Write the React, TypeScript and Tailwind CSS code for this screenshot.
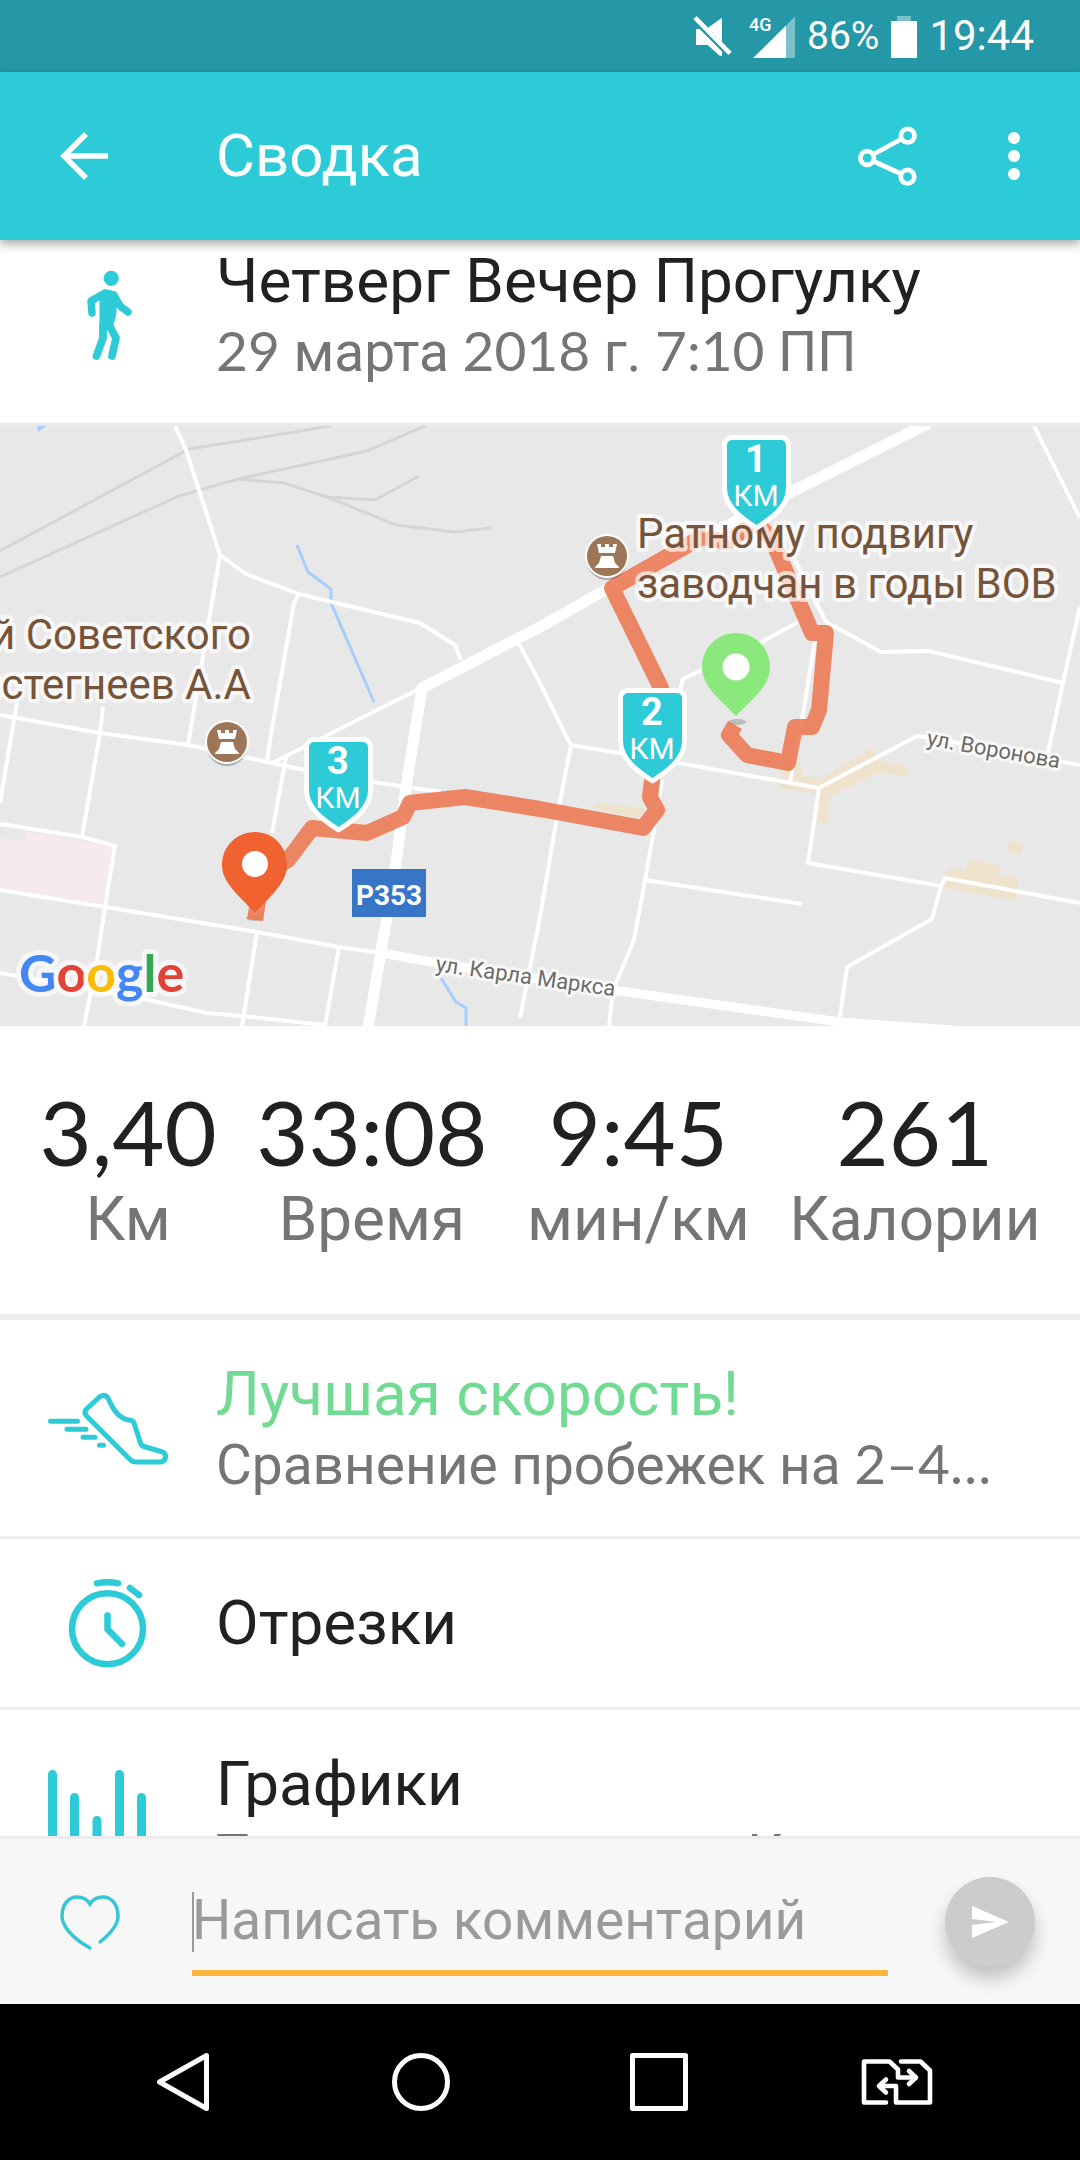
import { useState } from "react";
import type { FormEvent, ReactNode } from "react";

const stats = [
    { value: "3,40", label: "Км" },
    { value: "33:08", label: "Время" },
    { value: "9:45", label: "мин/км" },
    { value: "261", label: "Калории" },
];

const railways = [
    "0,125 189,23 331,0",
    "0,151 179,70 238,53 367,25 427,-1",
    "238,53 284,57 327,71 375,74 419,50",
    "327,71 396,99 455,106 491,102",
];

const streets = [
    "175,0 186,24 220,129 246,148 299,168 336,177 420,197 455,219 461,234",
    "220,129 208,200 188,319",
    "299,168 294,177 270,314 267,336",
    "417,264 324,311 272,337",
    "0,289 28,294 100,307 188,319 267,336 305,344 372,356 441,366",
    "17,277 14,294 0,377",
    "103,281 100,307 82,411",
    "0,398 82,411 115,420 105,481 96,541 84,600",
    "0,464 105,481 257,506 339,521 382,527",
    "286,331 272,407",
    "257,506 242,600",
    "339,521 325,600",
    "0,547 148,574 207,587 242,590 324,599",
    "518,216 540,257 568,314 571,319 557,391 540,491 520,592",
    "571,319 619,327 678,337 819,362 917,310 930,312 1080,339",
    "819,362 808,437 941,460 945,452 1080,477",
    "941,460 932,493 847,541 840,591",
    "645,454 802,478",
    "662,354 654,404 645,454 634,514 616,557 612,574 609,600",
    "1034,0 1080,92",
    "1080,181 1063,257 1048,327",
    "826,196 881,226 929,225 1063,257",
    "795,134 826,196",
    "802,194 760,217 683,253 679,271",
    "815,214 802,294 790,356",
];

const kmMarkers = [
    { km: 3, x: 304, y: 311 },
    { km: 2, x: 618, y: 262 },
    { km: 1, x: 722, y: 9 },
];

function StatusBar() {
    return (
        <div className="flex h-[72px] shrink-0 items-center justify-end bg-[#2498a6] pr-[46px] text-white">
            <svg viewBox="0 0 44 44" className="size-11" fill="#fff">
                <path d="M16.7 14 31 3.7V28Z" />
                <path d="M5 15h3.700L31 37.500V42h-2L16.700 31H5Z" />
                <path d="M4 3.700 39 39.300" stroke="#fff" strokeWidth="4.500" />
            </svg>
            <svg viewBox="0 0 48 44" className="ml-3 h-11 w-12" fill="#fff">
                <path d="M39 11.500 48 2.500V44H39Z" opacity=".4" />
                <path d="M6 44 39 11.500V44Z" />
                <text x="2" y="17" fontSize="18" fontWeight="500" fontFamily="Roboto, sans-serif">
                    4G
                </text>
            </svg>
            <span className="ml-3 text-[39px] leading-none">86%</span>
            <svg viewBox="0 0 26 44" className="ml-3 h-11 w-[26px]" fill="#fff">
                <path d="M6 2h14v5H6Z" opacity=".4" />
                <path d="M0 7h26v37H0Z" />
            </svg>
            <span className="ml-3 text-[42px] leading-none">19:44</span>
        </div>
    );
}

function AppBar() {
    return (
        <header className="relative z-10 flex h-[168px] shrink-0 items-center bg-[#2dcad7] text-white shadow-[0_4px_10px_rgba(0,0,0,0.35)]">
            <button type="button" aria-label="Назад" className="w-[216px] pl-[60px]">
                <svg viewBox="0 0 48 48" className="size-12" fill="none" stroke="#fff" strokeWidth="5.500">
                    <path d="M26 2 4 24 26 46M4 24H48" />
                </svg>
            </button>
            <h1 className="flex-1 text-[60px] leading-[72px]">Сводка</h1>
            <button type="button" aria-label="Поделиться">
                <svg viewBox="0 0 60 60" className="size-[60px]" fill="none" stroke="#fff" strokeWidth="4.700">
                    <circle cx="49.700" cy="9.700" r="6.800" />
                    <circle cx="9.200" cy="32" r="6.800" />
                    <circle cx="49.500" cy="50.700" r="6.800" />
                    <path d="M15 28.500 43.500 13M15 35 43.500 48" />
                </svg>
            </button>
            <button type="button" aria-label="Ещё" className="mr-9 ml-[66px]">
                <svg viewBox="0 0 60 60" className="size-[60px]" fill="#fff">
                    <circle cx="30" cy="12" r="6" />
                    <circle cx="30" cy="30" r="6" />
                    <circle cx="30" cy="48" r="6" />
                </svg>
            </button>
        </header>
    );
}

function Row({
    icon,
    title,
    titleClass = "text-[#212121]",
    children,
}: {
    icon: ReactNode;
    title: string;
    titleClass?: string;
    children?: ReactNode;
}) {
    return (
        <div className={children ? "flex h-[216px] items-center" : "flex h-[168px] items-center"}>
            <div className="flex w-[216px] shrink-0 pl-12">
                <svg viewBox="0 0 120 120" className="size-[120px]" fill="none" stroke="#2dcad7" strokeLinecap="round" strokeLinejoin="round">
                    {icon}
                </svg>
            </div>
            <div className="min-w-0 flex-1 pr-12">
                <h2 className={`text-[62px] leading-[74px] whitespace-nowrap ${titleClass}`}>{title}</h2>
                {children && (
                    <p className="text-[55px] leading-[68px] whitespace-nowrap text-[#757575]">{children}</p>
                )}
            </div>
        </div>
    );
}

function Num({ children }: { children: ReactNode }) {
    return <span className="font-[Lato,sans-serif] leading-none">{children}</span>;
}

function Castle({ x, y }: { x: number; y: number }) {
    return (
        <g transform={`translate(${x} ${y})`}>
            <circle cy="3" r="21" fill="#000" opacity=".25" />
            <circle r="22" fill="#fff" />
            <circle r="20" fill="#9d7658" />
            <path
                d="M-10-12h4v3h4v-3h4v3h4v-3h4l-2 9H-8ZM-6 0H6L8 7l4 4v1H-12V11l4-4Z"
                fill="#fff"
            />
        </g>
    );
}

function RouteMap() {
    return (
        <svg
            viewBox="0 0 1080 600"
            preserveAspectRatio="xMidYMid slice"
            className="block w-full bg-[#e8e8e8]"
            fontFamily="Roboto, sans-serif"
            role="img"
            aria-label="Карта маршрута"
        >
            <path d="M0 412 26 415V406L115 421 105 478 0 463Z" fill="#f6eaed" />
            <g fill="#efe3cd">
                <path d="M596 377 645 382 640 392 594 383Z" />
                <path d="M783 340 800 336 802 350 822 352 872 322 884 336 908 340 907 350 876 347 830 370 828 397 818 396 820 368 779 362Z" />
                <path d="M1009 415 1023 417 1021 428 1007 426Z" />
                <path d="M948 443 966 445 967 434 1001 440 999 449 1019 452 1017 475 944 462Z" />
            </g>
            <g fill="none" stroke="#d5d5d5" strokeWidth="3">
                {railways.map((points) => (
                    <polyline key={points} points={points} />
                ))}
            </g>
            <path d="M37 0H46L38 6Z" fill="#a6cdfb" />
            <g fill="none" stroke="#a6cdfb" strokeWidth="3">
                <polyline points="297,119 308,146 331,163 331,177 374,276" />
                <polyline points="441,552 456,576 466,582 466,600" />
            </g>
            <g fill="none" stroke="#fff" strokeWidth="4" strokeLinejoin="round">
                {streets.map((points) => (
                    <polyline key={points} points={points} />
                ))}
                <polyline points="929,-3 791,66 605,164 540,201 422,262 406,361 395,444 368,602" strokeWidth="11" />
                <polyline points="382,527 437,537 540,553 619,565 840,596 953,604" strokeWidth="9" />
            </g>

            <ellipse cx="737" cy="296" rx="9" ry="3" fill="#bbb" />
            <ellipse cx="255" cy="492" rx="9" ry="3" fill="#bbb" />
            <polyline
                points="735,299 729,309 747,329 788,337 795,301 812,301 819,284 826,207 812,207 771,111 756,97 726,116 702,111 612,162 661,262 654,340 650,371 657,384 643,402 540,383 465,371 410,377 403,391 367,407 312,402 288,434 262,450 255,494"
                fill="none"
                stroke="#ec7a54"
                strokeWidth="16"
                strokeLinejoin="round"
                opacity=".9"
            />

            <g fontSize="42" fill="#76543a" stroke="#fff" strokeOpacity=".7" strokeWidth="8" strokeLinejoin="round" paintOrder="stroke">
                <text x="637" y="122">
                    Ратному подвигу
                </text>
                <text x="637" y="172">
                    заводчан в годы ВОВ
                </text>
                <text x="251" y="223" textAnchor="end">
                    й Советского
                </text>
                <text x="251" y="273" textAnchor="end">
                    встегнеев А.А
                </text>
            </g>
            <g fontSize="22" fill="#6b6b6b" stroke="#fff" strokeOpacity=".7" strokeWidth="6" strokeLinejoin="round" paintOrder="stroke">
                <text transform="translate(435 545) rotate(8)">ул. Карла Маркса</text>
                <text transform="translate(926 319) rotate(10)">ул. Воронова</text>
            </g>
            <Castle x={607} y={130} />
            <Castle x={227} y={316} />

            <rect x="352" y="443" width="74" height="48" fill="#3775c6" />
            <text x="389" y="479" textAnchor="middle" fontSize="28" fontWeight="700" fill="#fff">
                P353
            </text>

            <path d="M736 207c19 0 34 15 34 34 0 20-20 34-34 49-14-15-34-29-34-49 0-19 15-34 34-34Z" fill="#8be87d" />
            <circle cx="736" cy="241" r="13.500" fill="#fff" />
            <path d="M255 406c18 0 32 14 32 33 0 19-19 33-32 48-13-15-33-29-33-48 0-19 15-33 33-33Z" fill="#f06230" />
            <circle cx="255" cy="438" r="13" fill="#fff" />

            {kmMarkers.map(({ km, x, y }) => (
                <g key={km} transform={`translate(${x} ${y})`} fill="#fff" textAnchor="middle">
                    <path
                        d="M10 2.500H59A7.500 7.500 0 0 1 66.500 10V53C66.500 72 48 84 34.500 93 21 84 2.500 72 2.500 53V10A7.500 7.500 0 0 1 10 2.500Z"
                        fill="#2dcad7"
                        stroke="#fff"
                        strokeWidth="5"
                        strokeLinejoin="round"
                    />
                    <text x="34" y="37" fontSize="38" fontWeight="700">
                        {km}
                    </text>
                    <text x="34" y="71" fontSize="30">
                        КМ
                    </text>
                </g>
            ))}

            <text
                x="19"
                y="566"
                fontSize="52"
                fontWeight="700"
                fontFamily="Lato, sans-serif"
                stroke="#fff"
                strokeOpacity=".6"
                strokeWidth="10"
                strokeLinejoin="round"
                paintOrder="stroke"
            >
                <tspan fill="#4486f4">G</tspan>
                <tspan fill="#e34236">o</tspan>
                <tspan fill="#fbbc05">o</tspan>
                <tspan fill="#4486f4">g</tspan>
                <tspan fill="#34a852">l</tspan>
                <tspan fill="#e34236">e</tspan>
            </text>
        </svg>
    );
}

function CommentBar() {
    const [comment, setComment] = useState("");

    const handleSubmit = (e: FormEvent) => {
        e.preventDefault();
        setComment("");
    };

    return (
        <form onSubmit={handleSubmit} className="flex h-[168px] shrink-0 items-center border-t-[3px] border-[#ececec] bg-[#f7f7f7]">
            <button type="button" aria-label="Нравится" className="w-48 shrink-0 pl-[60px]">
                <svg viewBox="0 0 60 60" className="size-[60px]" fill="none" stroke="#38c6d3" strokeWidth="3.500" strokeLinecap="round">
                    <path d="M30 56C12 46 2 34 2 24 2 12 9 5 17 5 23 5 27 7 30 12 33 7 37 5 43 5 51 5 58 12 58 24 58 33 50 42 40 50" />
                </svg>
            </button>
            <div className="relative min-w-0 flex-1">
                <input
                    type="text"
                    aria-label="Написать комментарий"
                    placeholder="Написать комментарий"
                    value={comment}
                    onChange={(e) => setComment(e.target.value)}
                    className="block h-[108px] w-full border-b-6 border-[#ffb83b] bg-transparent pt-0.5 text-[55px] text-[#212121] outline-none placeholder:text-[#9a9a9a]"
                />
                {comment === "" && <span className="absolute top-6 left-0 h-[60px] w-0.5 bg-[#9a9a9a]" />}
            </div>
            <div className="flex w-48 shrink-0 justify-end pr-[45px]">
                <button
                    type="submit"
                    aria-label="Отправить"
                    className="flex size-[90px] items-center justify-center rounded-full bg-[#ccc] shadow-[0_12px_18px_rgba(0,0,0,0.22)]"
                >
                    <svg viewBox="0 0 38 34" className="h-[34px] w-[38px]" fill="#fff">
                        <path d="M1 1 38 17 1 33V20L26 17 1 14Z" />
                    </svg>
                </button>
            </div>
        </form>
    );
}

function NavBar() {
    return (
        <nav className="flex h-[156px] shrink-0 items-center justify-around bg-black px-16">
            <button type="button" aria-label="Назад">
                <svg viewBox="0 0 60 60" className="size-[60px]" fill="none" stroke="#fff" strokeWidth="5" strokeLinejoin="round">
                    <path d="M53.500 3.500V56.500L6.500 30Z" />
                </svg>
            </button>
            <button type="button" aria-label="Домой">
                <svg viewBox="0 0 60 60" className="size-[60px]" fill="none" stroke="#fff" strokeWidth="5">
                    <circle cx="30" cy="30" r="26.500" />
                </svg>
            </button>
            <button type="button" aria-label="Недавние">
                <svg viewBox="0 0 60 60" className="size-[60px]" fill="none" stroke="#fff" strokeWidth="5" strokeLinejoin="round">
                    <path d="M3.500 3.500H56.500V56.500H3.500Z" />
                </svg>
            </button>
            <button type="button" aria-label="Сменить SIM">
                <svg viewBox="0 0 80 60" className="-mx-2.5 h-[60px] w-20" fill="none" stroke="#fff" strokeWidth="4.600" strokeLinecap="round" strokeLinejoin="round">
                    <path d="M29 50.500H7V9.500H32.500L41 17.500V25.500H58" />
                    <path d="M52 19 59 25.500 52 32" />
                    <path d="M44 9.500H63.500L73 18.500V50.500H39V34H23" />
                    <path d="M29 27.500 22 34 29 40.500" />
                </svg>
            </button>
        </nav>
    );
}

function App() {
    return (
        <div className="flex h-screen flex-col overflow-hidden bg-white font-[Roboto,sans-serif]">
            <StatusBar />
            <AppBar />
            <main className="min-h-0 flex-1 overflow-hidden">
                {/* list is scrolled a little under the app bar */}
                <div className="-mt-[33px] border-b-[3px] border-[#ebebeb]">
                    <Row
                        title="Четверг Вечер Прогулку"
                        icon={
                            <>
                                <circle cx="63.200" cy="23.300" r="7.600" fill="#2dcad7" stroke="none" />
                                <path d="M54 39C57 37 62 36 66 40L66 58 63 70 54 74Z" fill="#2dcad7" strokeWidth="5" />
                                <path d="M44 58 43 46 57 38M66 40 72 51 80 57" strokeWidth="7.500" />
                                <path d="M55 70V83L48.500 101M60 68 68 83 64 101" strokeWidth="7.800" />
                            </>
                        }
                    >
                        <Num>29</Num> марта <Num>2018</Num> г. <Num>7:10</Num> ПП
                    </Row>
                </div>

                <RouteMap />

                <section className="flex h-[294px] items-center justify-evenly border-b-6 border-[#eee] text-center">
                    {stats.map(({ value, label }) => (
                        <div key={label}>
                            <p className="font-[Lato,sans-serif] text-[90px] leading-[98px] text-[#212121]">{value}</p>
                            <p className="text-[62px] leading-[78px] text-[#757575]">{label}</p>
                        </div>
                    ))}
                </section>

                <ul className="divide-y-[3px] divide-[#eee]">
                    <li>
                        <Row
                            title="Лучшая скорость!"
                            titleClass="text-[#72db93]"
                            icon={
                                <>
                                    <path
                                        d="M52 28.500 38.500 41Q35.500 44 38.500 48L82 91.500Q84.500 94 88 94H113Q118 93 117.500 87.500 117 84.500 113 83.500L96 78.500Q93.500 78 92.500 75L86 55Q85 52 81 52C72 51 66 44 60 30Q57 25.500 52 28.500Z"
                                        strokeWidth="5"
                                    />
                                    <path d="M2.500 53.300H29.500M19 61.300H38M35 69.300H47M51.500 77.300H55.500" strokeWidth="5" />
                                </>
                            }
                        >
                            Сравнение пробежек на <Num>2–4…</Num>
                        </Row>
                    </li>
                    <li>
                        <Row
                            title="Отрезки"
                            icon={
                                <g strokeWidth="6.500">
                                    <circle cx="59.500" cy="65.700" r="35.500" />
                                    <path d="M59.500 52.500V66.300L74 81M49 20.300Q59.500 18 70 20.300M82 25 91 32" />
                                </g>
                            }
                        />
                    </li>
                    <li>
                        <Row
                            title="Графики"
                            icon={
                                <path
                                    d="M4.500 16.500V104M26.500 39.500V104M49 62.500V104M71.500 16.500V104M93.500 39.500V104"
                                    strokeWidth="9"
                                />
                            }
                        >
                            Темп, высота, пульс Ккал
                        </Row>
                    </li>
                </ul>
            </main>
            <CommentBar />
            <NavBar />
        </div>
    );
}

export default App;
